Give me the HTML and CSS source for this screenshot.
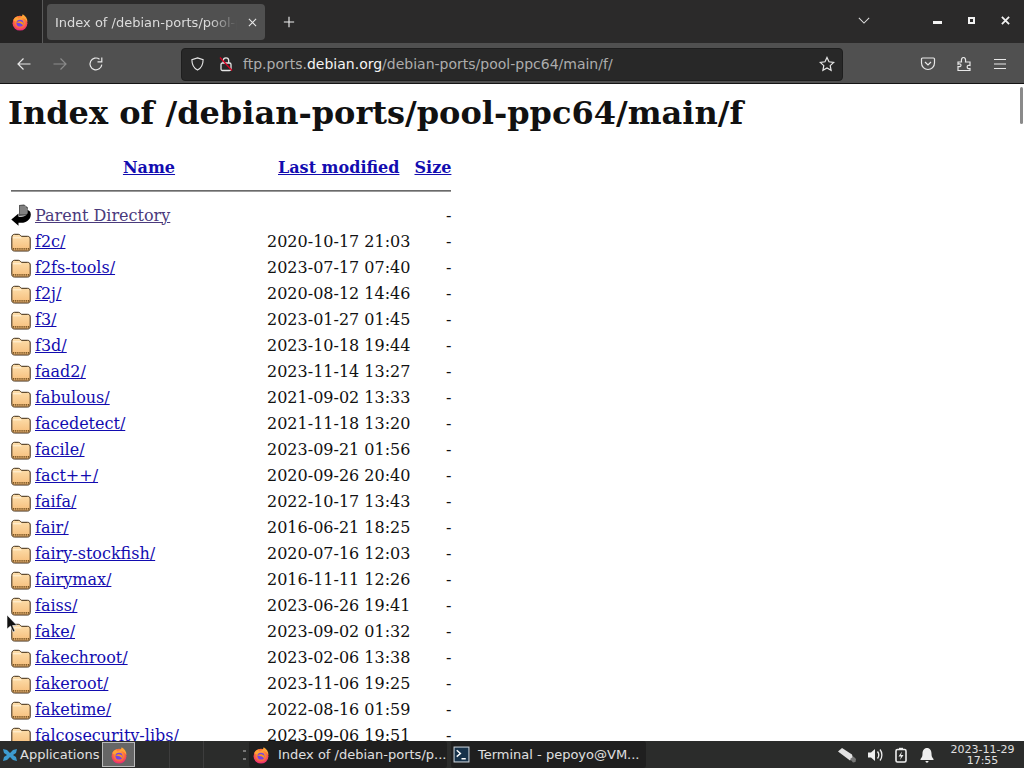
FILE: index.html
```html
<!DOCTYPE html>
<html lang="en">
<head>
<meta charset="utf-8">
<title>Index of /debian-ports/pool-ppc64/main/f/</title>
<link rel="stylesheet" href="styles.css">
</head>
<body>
<svg class="defs" width="0" height="0" aria-hidden="true">
  <defs>
    <radialGradient id="fxbody" cx="50%" cy="40%" r="65%">
      <stop offset="0" stop-color="#ffbd3f"/><stop offset=".55" stop-color="#ff7139"/><stop offset="1" stop-color="#e31587"/>
    </radialGradient>
    <linearGradient id="fold" x1="0" y1="0" x2="0" y2="1">
      <stop offset="0" stop-color="#fde0ae"/><stop offset="1" stop-color="#f6bd7a"/>
    </linearGradient>
    <symbol id="firefox" viewBox="0 0 16 16">
      <circle cx="8" cy="9" r="6.6" fill="url(#fxbody)"/>
      <path d="M2 6.5C3 3.800 5 3 6.200 3 5.600 4 6 4.600 6.600 5 8.200 4.600 9.600 4 10.400 1c2.600 1.400 4.400 4 4.200 7.200-1-2.200-2.600-3.400-4-3.600L7 6 3.600 7.600z" fill="#ffa436"/>
      <circle cx="8" cy="9" r="3.100" fill="#7542e5"/>
      <path d="M5 8.400c1.400-1.200 3.400-1.400 5-.4 1 .8 1.200 2 .8 3-.6-1.400-2.600-2-5.800-2.600z" fill="#ff980e"/>
    </symbol>
    <symbol id="folder" viewBox="0 0 20 22">
      <path d="M.8 7.500C.8 5.500 2 4.300 3.500 4.300h3.800C9 4.300 9.500 5.800 10.500 6.300H16.500c1.800 0 2.700 1 2.700 2.700v9.300c0 1.700-1 2.700-2.500 2.700H3.500C1.800 21 .8 20 .8 18.300z" fill="url(#fold)" stroke="#3a2710" stroke-width="1"/>
      <path d="M1.800 18.800h16.400" stroke="#7a5524" stroke-width="1.800" stroke-dasharray="1.200 .7"/>
      <path d="M2 7.800h8.500" stroke="#fff3da" stroke-width="1"/>
    </symbol>
  </defs>
</svg>

<div class="window">
  <header class="tabbar">
    <div class="appmenu"><svg class="ic16"><use href="#firefox"/></svg></div>
    <div class="tab">
      <span class="tab-title">Index of /debian-ports/pool-ppc64/main/f/</span>
      <svg class="tab-close" viewBox="0 0 10 10"><path d="M1 1l8 8M9 1l-8 8"/></svg>
    </div>
    <svg class="newtab" viewBox="0 0 14 14"><path d="M7 1v12M1 7h12"/></svg>
    <div class="spring"></div>
    <svg class="tablist" viewBox="0 0 14 8"><path d="M1 1l6 6 6-6"/></svg>
    <div class="wm">
      <span class="wm-min"></span>
      <span class="wm-max"></span>
      <svg class="wm-close" viewBox="0 0 10 10"><path d="M1 1l8 8M9 1l-8 8"/></svg>
    </div>
  </header>

  <nav class="toolbar">
    <svg class="tool tool-back" viewBox="0 0 16 16"><path d="M14.500 8H2M7.500 2.500L2 8l5.500 5.500"/></svg>
    <svg class="tool tool-fwd" viewBox="0 0 16 16"><path d="M1.500 8H14M8.500 2.500L14 8l-5.500 5.500"/></svg>
    <svg class="tool tool-reload" viewBox="0 0 16 16"><path d="M13.800 8.600A5.900 5.900 0 1 1 11.500 3.200M13.800 1.500v4.300H9.500"/></svg>
    <div class="urlbar">
      <svg class="url-shield" viewBox="0 0 16 16"><path d="M8 1.500l6 1.800c0 5.500-1.500 9-6 11.200-4.500-2.200-6-5.700-6-11.200z"/></svg>
      <svg class="url-lock" viewBox="0 0 16 16"><rect x="3" y="7" width="10" height="7.500" rx="1.500"/><path d="M5.300 7V4.500a2.700 2.700 0 0 1 5.400 0V7"/><path class="slash" d="M2 1.500l12 13"/></svg>
      <div class="url-text">ftp.ports.<b>debian.org</b>/debian-ports/pool-ppc64/main/f/</div>
      <svg class="url-star" viewBox="0 0 16 16"><path d="M8 1.500l2 4.300 4.700.6-3.500 3.200.9 4.700L8 12l-4.100 2.300.9-4.700L1.300 6.400 6 5.800z"/></svg>
    </div>
    <div class="toolset">
      <svg class="tool" viewBox="0 0 16 16"><path d="M2.500 2h11c.8 0 1 .5 1 1v4a6.500 6.500 0 0 1-13 0V3c0-.5.200-1 1-1zM5 6l3 3 3-3"/></svg>
      <svg class="tool" viewBox="0 0 16 16"><path d="M2 6h3.500C5 3 6 1.500 7.500 1.500S10 3 9.500 6H14v3.500c-2-.6-2.800.2-2.800 1.500s.8 2.100 2.800 1.500v2H2v-4c2 .6 3-.2 3-1.300S4 7.600 2 8.200z"/></svg>
      <svg class="tool" viewBox="0 0 16 16"><path d="M2 3.500h12M2 8h12M2 12.500h12"/></svg>
    </div>
  </nav>

  <main class="page">
    <h1 class="title">Index of /debian-ports/pool-ppc64/main/f</h1>
    <table class="listing">
      <tr class="head"><th class="ic"></th><th class="name"><a class="lnk" href="#n">Name</a></th><th><a class="lnk" href="#m">Last modified</a></th><th class="szh"><a class="lnk" href="#s">Size</a></th></tr>
      <tr><th colspan="4"><hr class="rule"></th></tr>
      <tr><td class="ic"><svg class="ficon" viewBox="0 0 20 22"><path d="M8 1l5-.5 4 3-1 8-8 .5z" fill="#5a5a5a"/><path d="M9 3h6M9 5h7M9 7h7M9 9h7" stroke="#bdbdbd" stroke-width=".8"/><path d="M.3 15.500L7.500 9.500v3.200H10c3 0 5-1 6-2.500.8-1.300.5-3 .5-4.200 1.500.3 3.300 1.500 3.300 4.500 0 5-4.500 8.300-9.500 8.300H7.500v3z" fill="#000"/></svg></td><td><a class="lnk seen" href="#p">Parent Directory</a></td><td>&nbsp;</td><td class="sz">-</td></tr>
      <tr><td class="ic"><svg class="ficon"><use href="#folder"/></svg></td><td><a class="lnk" href="#a">f2c/</a></td><td>2020-10-17 21:03</td><td class="sz">-</td></tr>
      <tr><td class="ic"><svg class="ficon"><use href="#folder"/></svg></td><td><a class="lnk" href="#a">f2fs-tools/</a></td><td>2023-07-17 07:40</td><td class="sz">-</td></tr>
      <tr><td class="ic"><svg class="ficon"><use href="#folder"/></svg></td><td><a class="lnk" href="#a">f2j/</a></td><td>2020-08-12 14:46</td><td class="sz">-</td></tr>
      <tr><td class="ic"><svg class="ficon"><use href="#folder"/></svg></td><td><a class="lnk" href="#a">f3/</a></td><td>2023-01-27 01:45</td><td class="sz">-</td></tr>
      <tr><td class="ic"><svg class="ficon"><use href="#folder"/></svg></td><td><a class="lnk" href="#a">f3d/</a></td><td>2023-10-18 19:44</td><td class="sz">-</td></tr>
      <tr><td class="ic"><svg class="ficon"><use href="#folder"/></svg></td><td><a class="lnk" href="#a">faad2/</a></td><td>2023-11-14 13:27</td><td class="sz">-</td></tr>
      <tr><td class="ic"><svg class="ficon"><use href="#folder"/></svg></td><td><a class="lnk" href="#a">fabulous/</a></td><td>2021-09-02 13:33</td><td class="sz">-</td></tr>
      <tr><td class="ic"><svg class="ficon"><use href="#folder"/></svg></td><td><a class="lnk" href="#a">facedetect/</a></td><td>2021-11-18 13:20</td><td class="sz">-</td></tr>
      <tr><td class="ic"><svg class="ficon"><use href="#folder"/></svg></td><td><a class="lnk" href="#a">facile/</a></td><td>2023-09-21 01:56</td><td class="sz">-</td></tr>
      <tr><td class="ic"><svg class="ficon"><use href="#folder"/></svg></td><td><a class="lnk" href="#a">fact++/</a></td><td>2020-09-26 20:40</td><td class="sz">-</td></tr>
      <tr><td class="ic"><svg class="ficon"><use href="#folder"/></svg></td><td><a class="lnk" href="#a">faifa/</a></td><td>2022-10-17 13:43</td><td class="sz">-</td></tr>
      <tr><td class="ic"><svg class="ficon"><use href="#folder"/></svg></td><td><a class="lnk" href="#a">fair/</a></td><td>2016-06-21 18:25</td><td class="sz">-</td></tr>
      <tr><td class="ic"><svg class="ficon"><use href="#folder"/></svg></td><td><a class="lnk" href="#a">fairy-stockfish/</a></td><td>2020-07-16 12:03</td><td class="sz">-</td></tr>
      <tr><td class="ic"><svg class="ficon"><use href="#folder"/></svg></td><td><a class="lnk" href="#a">fairymax/</a></td><td>2016-11-11 12:26</td><td class="sz">-</td></tr>
      <tr><td class="ic"><svg class="ficon"><use href="#folder"/></svg></td><td><a class="lnk" href="#a">faiss/</a></td><td>2023-06-26 19:41</td><td class="sz">-</td></tr>
      <tr><td class="ic"><svg class="ficon"><use href="#folder"/></svg></td><td><a class="lnk" href="#a">fake/</a></td><td>2023-09-02 01:32</td><td class="sz">-</td></tr>
      <tr><td class="ic"><svg class="ficon"><use href="#folder"/></svg></td><td><a class="lnk" href="#a">fakechroot/</a></td><td>2023-02-06 13:38</td><td class="sz">-</td></tr>
      <tr><td class="ic"><svg class="ficon"><use href="#folder"/></svg></td><td><a class="lnk" href="#a">fakeroot/</a></td><td>2023-11-06 19:25</td><td class="sz">-</td></tr>
      <tr><td class="ic"><svg class="ficon"><use href="#folder"/></svg></td><td><a class="lnk" href="#a">faketime/</a></td><td>2022-08-16 01:59</td><td class="sz">-</td></tr>
      <tr><td class="ic"><svg class="ficon"><use href="#folder"/></svg></td><td><a class="lnk" href="#a">falcosecurity-libs/</a></td><td>2023-09-06 19:51</td><td class="sz">-</td></tr>
    </table>
    <div class="scrollthumb"></div>
    <svg class="cursor" viewBox="0 0 12 20"><path d="M1 1v14l3.500-3 2.500 6 2-1-2.500-5.500H11z"/></svg>
  </main>

  <footer class="taskbar">
    <div class="apps">
      <svg class="xfce" viewBox="0 0 16 16"><path d="M1 2l4 1 3 3 3-3 4-1-1 4-3 2 3 2 1 4-4-1-3-3-3 3-4 1 1-4 3-2-3-2z"/></svg>
      <span>Applications</span>
    </div>
    <div class="launcher"><svg class="ic18"><use href="#firefox"/></svg></div>
    <span class="sep sep-a"></span>
    <span class="sep sep-b"></span>
    <span class="grip"></span>
    <div class="task task-web"><svg class="ic18"><use href="#firefox"/></svg><span class="task-label">Index of /debian-ports/p...</span></div>
    <div class="task task-term">
      <svg class="termic" viewBox="0 0 16 16"><rect x="1" y="1" width="14" height="14" fill="#17324a" stroke="#c8d0d8"/><path d="M3.500 4l3.500 3-3.500 3M8 12h4" fill="none" stroke="#fff" stroke-width="1.300"/></svg>
      <span class="task-label">Terminal - pepoyo@VM...</span>
    </div>
    <div class="spring"></div>
    <div class="tray">
      <svg class="tray-net" viewBox="0 0 20 16"><path d="M1 4.500L5 1l10 6.500 1 3.500-3 2.500z" fill="#e2e2e2"/><path d="M13 12l3.500-2.500L19 12l-.5 3-2.500.5z" fill="#777"/></svg>
      <svg class="tray-ic" viewBox="0 0 16 16"><path d="M1 5.500h3L8 2v12l-4-3.500H1z" fill="#eee"/><path d="M10.500 4.500c1.500 2 1.500 5 0 7M13 2.500c2.500 3 2.500 8 0 11" fill="none" stroke="#eee" stroke-width="1.300"/></svg>
      <svg class="tray-ic" viewBox="0 0 16 16"><rect x="3" y="2.500" width="10" height="12.500" rx="1.500" fill="none" stroke="#eee" stroke-width="1.600"/><path d="M6 .8h4v2H6z" fill="#eee"/><path d="M9 4.500L5.500 9.500H8L7 13l3.500-5H8z" fill="#eee"/></svg>
      <svg class="tray-ic" viewBox="0 0 16 16"><path d="M8 1c3 0 4.500 2.500 4.500 5.500 0 2.500.5 4 2 5.500v1h-13v-1c1.500-1.500 2-3 2-5.500C3.500 3.500 5 1 8 1zM6.500 14h3c0 1-.6 1.700-1.500 1.700S6.500 15 6.500 14z" fill="#eee"/></svg>
    </div>
    <div class="clock"><span>2023-11-29</span><span>17:55</span></div>
  </footer>
</div>
</body>
</html>
```
FILE: styles.css
```css
* { box-sizing: border-box; }
html, body { margin: 0; height: 100%; overflow: hidden; }
body { font-family: "DejaVu Sans", sans-serif; background: #fff; }
.defs { position: absolute; }
.window { display: flex; flex-direction: column; width: 1024px; height: 768px; }
.spring { flex: 1; }

/* tab strip */
.tabbar { display: flex; align-items: center; height: 43px; background: #2b2a2a; flex: none; padding-top: 1px; }
.appmenu { width: 43px; height: 43px; margin-top: -1px; display: flex; align-items: center; justify-content: center; border-right: 1px solid #5a5a5a; background: #242323; padding-right: 3px; }
.ic16 { width: 18px; height: 18px; }
.ic18 { width: 18px; height: 18px; flex: none; }
.tab { width: 218px; height: 36px; margin-left: 4px; background: #505050; border-radius: 4px; display: flex; align-items: center; padding: 0 8px; color: #dcdcdc; font-size: 13px; gap: 5px; }
.tab-title { flex: 1; overflow: hidden; white-space: nowrap; -webkit-mask-image: linear-gradient(to right, #000 82%, transparent 97%); mask-image: linear-gradient(to right, #000 82%, transparent 97%); }
.tab-close { width: 9px; height: 9px; fill: none; stroke: #e8e8e8; stroke-width: 1.200; flex: none; }
.newtab { width: 12px; height: 12px; margin-left: 18px; fill: none; stroke: #f0f0f0; stroke-width: 1.300; flex: none; }
.tablist { width: 12px; height: 7px; margin-right: 63px; fill: none; stroke: #ddd; stroke-width: 1.200; margin-top: -4px; }
.wm { display: flex; align-items: center; width: 77px; height: 12px; margin-top: -4px; margin-right: 14px; justify-content: space-between; }
.wm-min { width: 9px; height: 3px; background: #f2f2f2; margin-top: 4px; }
.wm-max { width: 7px; height: 7px; border: 2px solid #f2f2f2; }
.wm-close { width: 9px; height: 9px; fill: none; stroke: #f2f2f2; stroke-width: 2; }

/* nav toolbar */
.toolbar { display: flex; align-items: center; height: 41px; background: #505050; flex: none; padding: 2px 0 0 16px; border-bottom: 1px solid #141414; }
.tool { width: 16px; height: 16px; fill: none; stroke: #e8e8e8; stroke-width: 1.200; flex: none; }
.tool-fwd { margin-left: 20px; stroke: #8b8b8b; }
.tool-reload { margin-left: 20px; }
.urlbar { display: flex; align-items: center; width: 662px; height: 33px; background: #282828; border-radius: 4px; border: 1px solid #1e1e1e; margin-left: 77px; padding: 0 7px 0 8px; color: #adadad; font-size: 14px; }
.url-shield { width: 15px; height: 16px; fill: none; stroke: #e6e6e6; stroke-width: 1.200; flex: none; }
.url-lock { width: 16px; height: 16px; margin-left: 13px; fill: none; stroke: #e6e6e6; stroke-width: 1.300; flex: none; }
.slash { stroke: #d70022; }
.url-text { flex: 1; margin-left: 9px; white-space: nowrap; }
.url-text b { font-weight: normal; color: #f4f4f4; }
.url-star { width: 16px; height: 16px; fill: none; stroke: #e8e8e8; stroke-width: 1.200; flex: none; }
.toolset { display: flex; gap: 20px; margin-left: 77px; }

/* page */
.page { position: relative; flex: 1; overflow: hidden; background: #fff; padding: 11px 0 0 8px; color: #000; font-family: "DejaVu Serif", serif; font-size: 16px; min-height: 0; }
.title { font-size: 32px; font-weight: bold; margin: 0 0 23px; line-height: 37px; color: #111; }
.listing { border-spacing: 2px; color: #111; }
.listing th, .listing td { padding: 1px; }
.listing .ic { width: 22px; line-height: 0; }
.listing .name { width: 230px; }
.listing .szh { width: 39px; }
.ficon { display: block; width: 20px; height: 22px; }
.lnk { color: #120cb0; }
.seen { color: #4a3a7c; }
.rule { margin: 9px 0 8px; border: 0; border-top: 1px solid #6a6a6a; border-bottom: 1px solid #9a9a9a; height: 2px; }
.sz { text-align: right; }
.scrollthumb { position: absolute; right: 1px; top: 3px; width: 3px; height: 37px; background: #8a8a8a; border-radius: 2px; }
.cursor { position: absolute; left: 6px; top: 530px; width: 12px; height: 20px; fill: #111; stroke: #fff; stroke-width: .6; }

/* panel */
.taskbar { display: flex; align-items: center; height: 27px; flex: none; background: #2b2c2b; color: #e0e0e0; font-size: 13px; position: relative; }
.apps { display: flex; align-items: center; gap: 2px; padding-left: 2px; width: 102px; flex: none; }
.xfce { width: 16px; height: 16px; fill: #3d9bd0; flex: none; }
.launcher { width: 33px; height: 25px; background: #666; border: 1px solid #bbb; display: flex; align-items: center; justify-content: center; flex: none; }
.sep { width: 1px; height: 27px; background: #3d3d3d; flex: none; }
.sep-a { margin-left: 34px; }
.sep-b { margin-left: 33px; }
.grip { width: 3px; height: 10px; margin-left: 39px; flex: none; border-top: 2px solid #777; border-bottom: 2px solid #777; }
.task { display: flex; align-items: center; height: 27px; background: #1f1f1f; border-radius: 3px; flex: none; white-space: nowrap; }
.task-web { width: 198px; margin-left: 3px; padding-left: 3px; }
.task-term { width: 195px; margin-left: 4px; padding-left: 2px; }
.task-web .task-label { margin-left: 8px; }
.task-term .task-label { margin-left: 8px; }
.termic { width: 17px; height: 17px; flex: none; }
.tray { display: flex; align-items: center; gap: 10px; }
.tray-net { width: 20px; height: 16px; }
.tray-ic { width: 16px; height: 16px; }
.clock { display: flex; flex-direction: column; align-items: center; font-size: 11px; line-height: 11px; width: 63px; margin: 0 10px 0 16px; color: #e0e0e0; white-space: nowrap; flex: none; }
```
